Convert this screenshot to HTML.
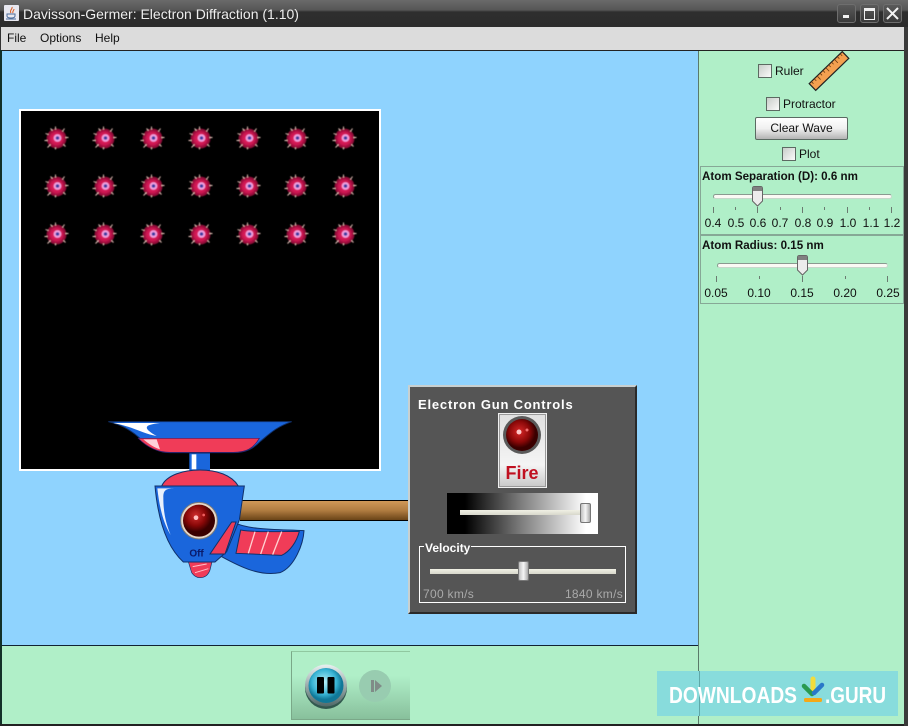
<!DOCTYPE html>
<html><head><meta charset="utf-8"><style>
html,body{margin:0;padding:0;background:#2a2a2a}
#w{position:relative;width:908px;height:726px;overflow:hidden;background:#333;font-family:"Liberation Sans",sans-serif;font-size:12px;color:#111}
#w div,#w span,#w svg{position:absolute}
.t{white-space:nowrap;line-height:14px}
.cb{width:12px;height:12px;border:1px solid #5c6a62;background:linear-gradient(135deg,#c8cec9,#fbfbfb)}
.track{height:3px;background:#fafaf4;border:1px solid;border-color:#8a9a90 #c8d8cc #c8d8cc #8a9a90;border-radius:3px}
.lab{white-space:nowrap;line-height:14px;transform:translateX(-50%);color:#111}
.tick{width:1px;background:#6a7a70}
.panel{left:700px;width:202px;height:67px;border:1px solid #86a896}
.wb{width:17px;height:17px;border:1px solid #6e6e6e;border-radius:3px;background:linear-gradient(#5a5a5a,#3a3a3a)}
</style></head><body><div id="w">
<!-- title bar -->
<div style="left:0;top:0;width:908px;height:27px;background:linear-gradient(#6a6a6a 0,#565656 10px,#2e2e2e 12px,#2c2c2c 27px)"></div>
<svg style="left:4px;top:5px" width="15" height="16" viewBox="0 0 15 16"><rect x="0" y="0" width="15" height="16" rx="1" fill="#e8e8f0"/><path d="M8 2c1 2-3 3-1 6M10 4c0 2-2 2-1 4" stroke="#d85a20" fill="none"/><path d="M3 9h8v2c0 1-1 2-4 2s-4-1-4-2zM2 14h10" stroke="#4a6a9a" fill="none"/></svg>
<div class="t" style="left:23px;top:6px;color:#eee;font-size:14px;line-height:16px">Davisson-Germer: Electron Diffraction (1.10)</div>
<div class="wb" style="left:837px;top:4px"></div>
<div style="left:843px;top:15px;width:6px;height:3px;background:#f0f0f0"></div>
<div class="wb" style="left:860px;top:4px"></div>
<div style="left:864px;top:8px;width:9px;height:8px;border:1px solid #f0f0f0;border-top-width:3px"></div>
<div class="wb" style="left:883px;top:4px"></div>
<svg style="left:884px;top:5px" width="18" height="18"><path d="M3 3L14 14M14 3L3 14" stroke="#f4f4f4" stroke-width="2"/></svg>
<!-- menu -->
<div style="left:1px;top:27px;width:903px;height:23px;background:#dcdcdc"></div>
<div class="t" style="left:7px;top:31px">File</div>
<div class="t" style="left:40px;top:31px">Options</div>
<div class="t" style="left:95px;top:31px">Help</div>
<!-- main -->
<div style="left:1px;top:50px;width:903px;height:675px;background:#b0efc8"></div>
<div style="left:1px;top:50px;width:903px;height:1px;background:#222"></div>
<div style="left:2px;top:51px;width:696px;height:594px;background:#8fd3fe"></div>
<div style="left:1px;top:645px;width:698px;height:1px;background:#123"></div>
<div style="left:698px;top:51px;width:1px;height:674px;background:#5a7a6a"></div>
<div style="left:0;top:50px;width:2px;height:676px;background:#123028"></div>
<div style="left:0;top:724px;width:908px;height:2px;background:#222"></div>
<div style="left:904px;top:27px;width:4px;height:699px;background:#3a3a3a"></div>
<!-- screen -->
<div style="left:19px;top:109px;width:358px;height:358px;border:2px solid #fff;background:#000"></div>
<svg style="left:0;top:100px" width="400" height="160" viewBox="0 100 400 160">
<defs>
<radialGradient id="ag"><stop offset="0" stop-color="#f03070"/><stop offset=".6" stop-color="#cc1450"/><stop offset="1" stop-color="#780a30"/></radialGradient>
<filter id="sf" x="-20%" y="-20%" width="140%" height="140%"><feGaussianBlur stdDeviation=".5"/></filter>
<g id="a"><circle r="10" fill="url(#ag)"/><path d="M-1-12V-9M8-10L6-7M12-1H9M9 8L7 6M-1 11V9M-9 9L-6 6M-12 2H-9M-11-5L-8-4M-6-10L-4-8" stroke="#f8d0c8" stroke-width=".9"/><circle r="3.800" cx="1" cy="-.5" fill="#f0a0e0"/><circle r="1.800" cx="1" cy="-.5" fill="#3a3aa0"/></g>
</defs>
<g filter="url(#sf)" transform="translate(.5 .5)">
<use href="#a" x="56" y="138"/><use href="#a" x="104" y="138"/><use href="#a" x="152" y="138"/><use href="#a" x="200" y="138"/><use href="#a" x="248" y="138"/><use href="#a" x="296" y="138"/><use href="#a" x="344" y="138"/>
<use href="#a" x="56" y="186"/><use href="#a" x="104" y="186"/><use href="#a" x="152" y="186"/><use href="#a" x="200" y="186"/><use href="#a" x="248" y="186"/><use href="#a" x="296" y="186"/><use href="#a" x="344" y="186"/>
<use href="#a" x="56" y="234"/><use href="#a" x="104" y="234"/><use href="#a" x="152" y="234"/><use href="#a" x="200" y="234"/><use href="#a" x="248" y="234"/><use href="#a" x="296" y="234"/><use href="#a" x="344" y="234"/>
</g>
</svg>
<!-- tube -->
<div style="left:240px;top:500px;width:168px;height:21px;box-sizing:border-box;border-top:1px solid #000;border-bottom:1px solid #000;background:linear-gradient(#d09858,#b07c40 50%,#6a4418)"></div>
<!-- gun -->
<svg style="left:100px;top:410px" width="220" height="175" viewBox="0 0 660 525">
<defs><radialGradient id="kn" cx=".4" cy=".35"><stop offset="0" stop-color="#d03030"/><stop offset=".6" stop-color="#8a0808"/><stop offset="1" stop-color="#3a0000"/></radialGradient></defs>
<path d="M25 35H575C530 50 510 70 480 95C460 115 440 128 400 128H210C170 128 150 110 125 90C100 65 70 45 25 35Z" fill="#1a66dc" stroke="#10306a" stroke-width="3"/>
<path d="M115 85H478C460 115 440 127 400 127H210C170 127 140 110 115 85Z" fill="#f03c58" stroke="#3a1a6a" stroke-width="2"/>
<path d="M40 39H180C140 44 120 50 170 78C130 72 100 50 40 39Z" fill="#fff"/>
<path d="M130 88H170L180 118C160 112 145 100 130 88Z" fill="#ffd0d8"/>
<rect x="268" y="130" width="62" height="60" fill="#1a66dc"/><rect x="275" y="133" width="14" height="45" fill="#fff"/>
<path d="M185 228C200 195 250 180 300 180C350 180 395 195 415 228Z" fill="#f03c58" stroke="#10306a" stroke-width="3"/>
<path d="M265 455L275 488Q285 503 300 503Q322 503 330 480L336 455Z" fill="#f03c58" stroke="#10306a" stroke-width="2"/>
<path d="M278 470L320 462M285 488L325 476" stroke="#ffc0c8" stroke-width="3"/>
<path d="M365 440L395 335C450 362 540 358 612 362C610 400 585 470 540 488C480 500 420 470 365 440Z" fill="#1a66dc" stroke="#10306a" stroke-width="3"/>
<path d="M422 360C470 368 540 364 598 364C590 395 570 425 545 436L408 430Z" fill="#f03c58" stroke="#10306a" stroke-width="3"/>
<path d="M465 365L445 430M505 365L482 432M545 365L518 434" stroke="#ffd0d0" stroke-width="4" fill="none"/>
<path d="M165 228H433L418 330L380 425L345 456H250C205 415 175 340 165 228Z" fill="#1a66dc" stroke="#10306a" stroke-width="3"/>
<path d="M172 235H222C198 236 190 240 190 262C190 310 198 340 212 375C190 340 178 290 172 235Z" fill="#fff" opacity=".9"/>
<path d="M395 336H408L375 432H330Z" fill="#f03c58" stroke="#10306a" stroke-width="3"/>
<circle cx="297" cy="332" r="55" fill="#e8d8c8" stroke="#7a7a7a" stroke-width="3"/>
<circle cx="297" cy="332" r="48" fill="url(#kn)"/>
<circle cx="288" cy="323" r="7" fill="#ffc0c0"/><circle cx="311" cy="315" r="4" fill="#f06060"/>
<text x="268" y="440" font-family="Liberation Sans" font-size="30" font-weight="bold" fill="#0a1a6a">Off</text>
</svg>
<!-- gun controls -->
<div style="left:408px;top:385px;width:225px;height:225px;border:2px solid;border-color:#c8d0d0 #2a2a2a #2a2a2a #c8d0d0;background:#555"></div>
<div class="t" style="left:418px;top:398px;color:#fff;font-weight:bold;font-size:13px;letter-spacing:.8px">Electron Gun Controls</div>
<div style="left:498px;top:413px;width:47px;height:73px;border:1px solid #f0f0f0;box-shadow:inset 0 0 0 1px #999;background:linear-gradient(#e0e0e0,#f4f4f4 70%,#c8c8c8)"></div>
<svg style="left:500px;top:414px" width="44" height="44"><defs><radialGradient id="kn2" cx=".42" cy=".4"><stop offset="0" stop-color="#d82828"/><stop offset=".65" stop-color="#8a0808"/><stop offset="1" stop-color="#3a0000"/></radialGradient></defs><circle cx="22" cy="21" r="19" fill="#5a5a5a"/><circle cx="22" cy="21" r="16" fill="url(#kn2)"/><circle cx="19" cy="18" r="2.500" fill="#ffc8c8"/><circle cx="27" cy="16" r="1.500" fill="#f07070"/></svg>
<div class="t" style="left:498px;top:463px;width:48px;text-align:center;color:#c01020;font-weight:bold;font-size:18px;line-height:20px">Fire</div>
<div style="left:447px;top:493px;width:151px;height:41px;background:linear-gradient(90deg,#000 0,#000 12%,#808080 50%,#fff 92%)"></div>
<div style="left:460px;top:510px;width:124px;height:5px;background:linear-gradient(#f0f0e4,#d8d8cc)"></div>
<div style="left:580px;top:503px;width:9px;height:18px;border:1px solid #777;border-radius:2px;background:linear-gradient(90deg,#c0c0c0,#f6f6f6 50%,#aaa)"></div>
<div style="left:419px;top:546px;width:205px;height:55px;border:1px solid #fff"></div>
<div class="t" style="left:424px;top:541px;background:#555;padding:0 1px;color:#fff;font-weight:bold;font-size:12px">Velocity</div>
<div style="left:430px;top:569px;width:186px;height:5px;background:linear-gradient(#f0f0e4,#d8d8cc)"></div>
<div style="left:518px;top:561px;width:9px;height:18px;border:1px solid #777;border-radius:2px;background:linear-gradient(90deg,#c0c0c0,#f6f6f6 50%,#aaa)"></div>
<div class="t" style="left:423px;top:587px;color:#aaa;font-size:12px;letter-spacing:.3px">700 km/s</div>
<div class="t" style="right:285px;top:587px;color:#aaa;font-size:12px;letter-spacing:.3px">1840 km/s</div>
<!-- clock controls -->
<div style="left:291px;top:651px;width:118px;height:67px;border-left:1px solid #7aa888;border-bottom:1px solid #7aa888;border-top:1px solid #90c8a0;background:linear-gradient(#b0efc8 35%,#88c09c)"></div>
<svg style="left:300px;top:660px" width="100" height="54"><defs><radialGradient id="pb" cx=".45" cy=".4"><stop offset="0" stop-color="#b8f0f8"/><stop offset=".7" stop-color="#38b4d4"/><stop offset="1" stop-color="#107898"/></radialGradient><linearGradient id="pr" x1="0" y1="0" x2="0" y2="1"><stop offset="0" stop-color="#e8f0f0"/><stop offset="1" stop-color="#506868"/></linearGradient></defs><circle cx="26" cy="28" r="21" fill="#103030" opacity=".75"/><circle cx="26" cy="25.500" r="21" fill="url(#pr)"/><circle cx="26" cy="25.500" r="17.500" fill="url(#pb)"/><rect x="17" y="17" width="7" height="16.500" rx="1" fill="#000"/><rect x="27.500" y="17" width="7" height="16.500" rx="1" fill="#000"/><circle cx="75" cy="26" r="16" fill="#98ccb0"/><rect x="71" y="20" width="3" height="12" fill="#808c88"/><path d="M75 20L82 26L75 32Z" fill="#808c88"/></svg>
<!-- right panel -->
<div class="cb" style="left:758px;top:64px"></div><div class="t" style="left:775px;top:64px">Ruler</div>
<svg style="left:808px;top:50px" width="42" height="42"><g transform="translate(21 21) rotate(-44)"><rect x="-23" y="-4.700" width="46" height="9.400" fill="#f4a050" stroke="#222" stroke-width="1.200"/><path d="M-20-4.700v3M-16-4.700v3M-12-4.700v5M-8-4.700v3M-4-4.700v3M0-4.700v5M4-4.700v3M8-4.700v3M12-4.700v5M16-4.700v3M20-4.700v3" stroke="#6a3a10" stroke-width=".8"/></g></svg>
<div class="cb" style="left:766px;top:97px"></div><div class="t" style="left:783px;top:97px">Protractor</div>
<div class="t" style="left:755px;top:117px;width:91px;height:21px;line-height:21px;text-align:center;border:1px solid #5a6a62;border-radius:2px;background:linear-gradient(#fff,#f0f0f0 50%,#b4b4b4)">Clear Wave</div>
<div class="cb" style="left:782px;top:147px"></div><div class="t" style="left:799px;top:147px">Plot</div>
<!-- atom separation -->
<div class="panel" style="top:166px"></div>
<div class="t" style="left:702px;top:170px;font-weight:bold;font-size:11.6px">Atom Separation (D): 0.6 nm</div>
<div class="track" style="left:713px;top:194px;width:177px"></div>
<svg style="left:752px;top:186px" width="12" height="22"><path d="M.5 2.500Q.5.5 2.500.5H8.500Q10.500.5 10.500 2.500V15L5.500 20L.5 15Z" fill="#ececec" stroke="#666"/><path d="M1 1H10V5H1Z" fill="#808080"/></svg>
<div class="tick" style="left:713px;top:207px;height:6px"></div><div class="tick" style="left:735px;top:207px;height:3px"></div><div class="tick" style="left:757px;top:207px;height:6px"></div><div class="tick" style="left:780px;top:207px;height:3px"></div><div class="tick" style="left:802px;top:207px;height:6px"></div><div class="tick" style="left:824px;top:207px;height:3px"></div><div class="tick" style="left:847px;top:207px;height:6px"></div><div class="tick" style="left:869px;top:207px;height:3px"></div><div class="tick" style="left:891px;top:207px;height:6px"></div>
<span class="lab" style="left:713px;top:216px">0.4</span><span class="lab" style="left:736px;top:216px">0.5</span><span class="lab" style="left:758px;top:216px">0.6</span><span class="lab" style="left:780px;top:216px">0.7</span><span class="lab" style="left:803px;top:216px">0.8</span><span class="lab" style="left:825px;top:216px">0.9</span><span class="lab" style="left:848px;top:216px">1.0</span><span class="lab" style="left:871px;top:216px">1.1</span><span class="lab" style="left:892px;top:216px">1.2</span>
<!-- atom radius -->
<div class="panel" style="top:235px"></div>
<div class="t" style="left:702px;top:239px;font-weight:bold;font-size:11.6px">Atom Radius: 0.15 nm</div>
<div class="track" style="left:717px;top:263px;width:169px"></div>
<svg style="left:797px;top:255px" width="12" height="22"><path d="M.5 2.500Q.5.5 2.500.5H8.500Q10.500.5 10.500 2.500V15L5.500 20L.5 15Z" fill="#ececec" stroke="#666"/><path d="M1 1H10V5H1Z" fill="#808080"/></svg>
<div class="tick" style="left:716px;top:276px;height:6px"></div><div class="tick" style="left:759px;top:276px;height:3px"></div><div class="tick" style="left:802px;top:276px;height:6px"></div><div class="tick" style="left:845px;top:276px;height:3px"></div><div class="tick" style="left:887px;top:276px;height:6px"></div>
<span class="lab" style="left:716px;top:286px">0.05</span><span class="lab" style="left:759px;top:286px">0.10</span><span class="lab" style="left:802px;top:286px">0.15</span><span class="lab" style="left:845px;top:286px">0.20</span><span class="lab" style="left:888px;top:286px">0.25</span>
<!-- watermark -->
<div style="left:657px;top:671px;width:241px;height:45px;background:#88dcdc"></div>
<div style="left:699px;top:671px;width:1px;height:45px;background:#5fa8a8"></div>
<svg style="left:657px;top:671px" width="241" height="45" viewBox="0 0 241 45">
<text x="12" y="32" font-family="Liberation Sans" font-weight="bold" font-size="23" fill="#fff" textLength="128" lengthAdjust="spacingAndGlyphs">DOWNLOADS</text>
<text x="168" y="32" font-family="Liberation Sans" font-weight="bold" font-size="23" fill="#fff" textLength="61" lengthAdjust="spacingAndGlyphs">.GURU</text>
<path d="M156 8v11" stroke="#f2dc3c" stroke-width="5" stroke-linecap="round"/>
<path d="M147 15l8 8" stroke="#2a9a50" stroke-width="4.500" stroke-linecap="round"/>
<path d="M165 14l-8 8" stroke="#2a78c8" stroke-width="4.500" stroke-linecap="round"/>
<rect x="147" y="27" width="18" height="4" rx="1.500" fill="#f4a818"/>
</svg>
</div></body></html>
